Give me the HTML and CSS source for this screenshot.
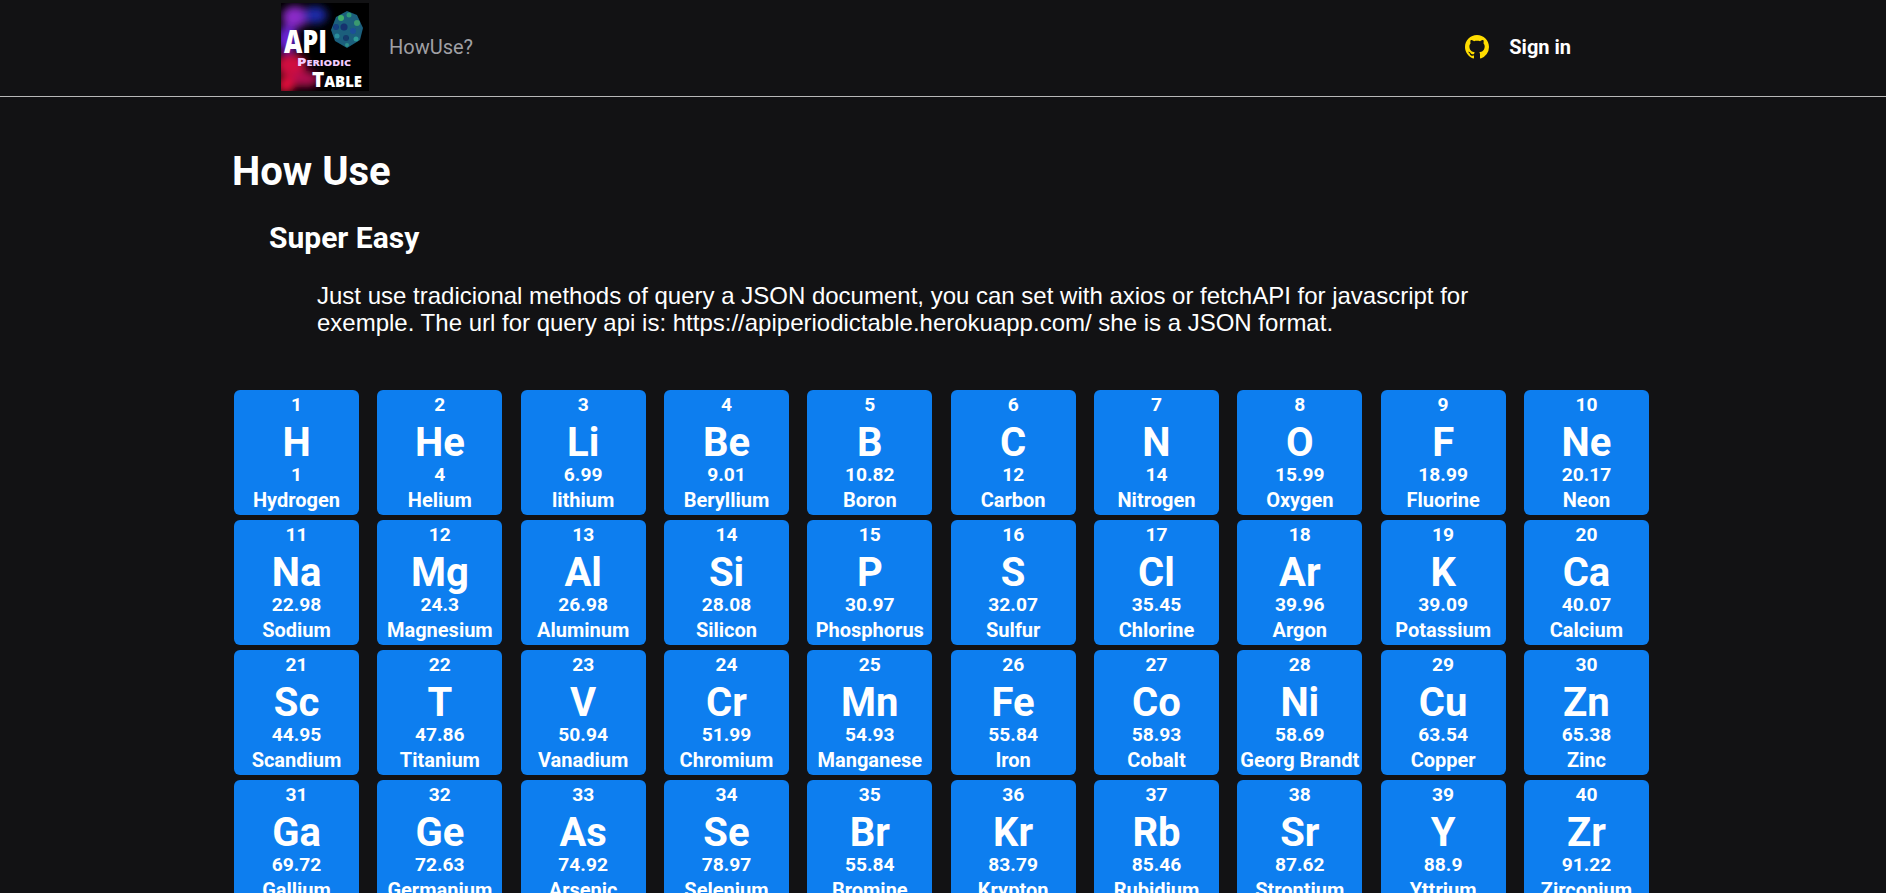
FILE: index.html
```html
<!DOCTYPE html>
<html lang="en">
<head>
<meta charset="utf-8">
<title>API Periodic Table</title>
<link rel="stylesheet" href="styles.css">
</head>
<body>
<header class="topbar">
  <div class="brand">
    <svg class="logo" viewBox="0 0 88 88" width="88" height="88" role="img" aria-label="API Periodic Table logo">
      <defs>
        <filter id="blur" x="-50%" y="-50%" width="200%" height="200%"><feGaussianBlur stdDeviation="4"/></filter>
        <filter id="blur2" x="-20%" y="-20%" width="140%" height="140%"><feGaussianBlur stdDeviation="0.5"/></filter>
        <clipPath id="square"><rect width="88" height="88"/></clipPath>
      </defs>
      <rect width="88" height="88" fill="#000"/>
      <g clip-path="url(#square)">
        <g filter="url(#blur)">
          <ellipse cx="14" cy="14" rx="13" ry="11" fill="#8a2bc8"/>
          <ellipse cx="34" cy="12" rx="12" ry="9" fill="#1b2aa8"/>
          <ellipse cx="6" cy="36" rx="10" ry="13" fill="#6a20d8"/>
          <ellipse cx="10" cy="62" rx="15" ry="12" fill="#d01040"/>
          <ellipse cx="24" cy="76" rx="14" ry="8" fill="#b00c50"/>
          <ellipse cx="5" cy="82" rx="9" ry="8" fill="#e8103c"/>
        </g>
        <g filter="url(#blur2)">
          <path d="M66 45 L54 38 L50 27 L55 14 L66 8 L76 12 L82 25 L79 37 Z" fill="#1a5f7c"/>
          <circle cx="60" cy="15" r="3" fill="#3fae6a"/>
          <circle cx="68" cy="12" r="2.5" fill="#2f9a78"/>
          <circle cx="76" cy="20" r="3" fill="#3a9a70"/>
          <circle cx="55" cy="24" r="3" fill="#123f80"/>
          <circle cx="63" cy="24" r="3.5" fill="#16306e"/>
          <circle cx="72" cy="28" r="3" fill="#1d4f98"/>
          <circle cx="56" cy="33" r="2.5" fill="#2a8d9a"/>
          <circle cx="65" cy="35" r="3" fill="#123a6a"/>
          <circle cx="75" cy="36" r="2.5" fill="#2d9a96"/>
          <circle cx="66" cy="42" r="2" fill="#2f8f8a"/>
        </g>
      </g>
      <text class="logo-api" x="3" y="50" textLength="43" lengthAdjust="spacingAndGlyphs">API</text>
      <text class="logo-periodic" x="16" y="63" textLength="54" lengthAdjust="spacingAndGlyphs"><tspan class="logo-cap">P</tspan>ERIODIC</text>
      <text class="logo-table" x="31" y="84" textLength="50" lengthAdjust="spacingAndGlyphs"><tspan class="logo-t">T</tspan>ABLE</text>
    </svg>
    <a class="howuse" href="#">HowUse?</a>
  </div>
  <div class="account">
    <svg class="github" viewBox="0 0 16 16" width="24" height="24" aria-hidden="true"><path fill="#ffdd00" d="M8 0C3.58 0 0 3.58 0 8c0 3.54 2.29 6.53 5.47 7.59.4.07.55-.17.55-.38 0-.19-.01-.82-.01-1.49-2.01.37-2.53-.49-2.69-.94-.09-.23-.48-.94-.82-1.13-.28-.15-.68-.52-.01-.53.63-.01 1.08.58 1.23.82.72 1.21 1.87.87 2.33.66.07-.52.28-.87.51-1.07-1.78-.2-3.64-.89-3.64-3.95 0-.87.31-1.59.82-2.15-.08-.2-.36-1.02.08-2.12 0 0 .67-.21 2.2.82.64-.18 1.32-.27 2-.27.68 0 1.36.09 2 .27 1.53-1.04 2.2-.82 2.2-.82.44 1.1.16 1.92.08 2.12.51.56.82 1.27.82 2.15 0 3.07-1.87 3.75-3.65 3.95.29.25.54.73.54 1.48 0 1.07-.01 1.93-.01 2.2 0 .21.15.46.55.38A8.013 8.013 0 0016 8c0-4.42-3.58-8-8-8z"/></svg>
    <a class="signin" href="#">Sign in</a>
  </div>
</header>
<main class="content">
  <h1 class="title">How Use</h1>
  <h2 class="subtitle">Super Easy</h2>
  <p class="intro">Just use tradicional methods of query a JSON document, you can set with axios or fetchAPI for javascript for exemple. The url for query api is: https://apiperiodictable.herokuapp.com/ she is a JSON format.</p>
  <section class="table">
    <div class="card"><span class="num">1</span><span class="sym">H</span><span class="num">1</span><span class="name">Hydrogen</span></div>
    <div class="card"><span class="num">2</span><span class="sym">He</span><span class="num">4</span><span class="name">Helium</span></div>
    <div class="card"><span class="num">3</span><span class="sym">Li</span><span class="num">6.99</span><span class="name">lithium</span></div>
    <div class="card"><span class="num">4</span><span class="sym">Be</span><span class="num">9.01</span><span class="name">Beryllium</span></div>
    <div class="card"><span class="num">5</span><span class="sym">B</span><span class="num">10.82</span><span class="name">Boron</span></div>
    <div class="card"><span class="num">6</span><span class="sym">C</span><span class="num">12</span><span class="name">Carbon</span></div>
    <div class="card"><span class="num">7</span><span class="sym">N</span><span class="num">14</span><span class="name">Nitrogen</span></div>
    <div class="card"><span class="num">8</span><span class="sym">O</span><span class="num">15.99</span><span class="name">Oxygen</span></div>
    <div class="card"><span class="num">9</span><span class="sym">F</span><span class="num">18.99</span><span class="name">Fluorine</span></div>
    <div class="card"><span class="num">10</span><span class="sym">Ne</span><span class="num">20.17</span><span class="name">Neon</span></div>
    <div class="card"><span class="num">11</span><span class="sym">Na</span><span class="num">22.98</span><span class="name">Sodium</span></div>
    <div class="card"><span class="num">12</span><span class="sym">Mg</span><span class="num">24.3</span><span class="name">Magnesium</span></div>
    <div class="card"><span class="num">13</span><span class="sym">Al</span><span class="num">26.98</span><span class="name">Aluminum</span></div>
    <div class="card"><span class="num">14</span><span class="sym">Si</span><span class="num">28.08</span><span class="name">Silicon</span></div>
    <div class="card"><span class="num">15</span><span class="sym">P</span><span class="num">30.97</span><span class="name">Phosphorus</span></div>
    <div class="card"><span class="num">16</span><span class="sym">S</span><span class="num">32.07</span><span class="name">Sulfur</span></div>
    <div class="card"><span class="num">17</span><span class="sym">Cl</span><span class="num">35.45</span><span class="name">Chlorine</span></div>
    <div class="card"><span class="num">18</span><span class="sym">Ar</span><span class="num">39.96</span><span class="name">Argon</span></div>
    <div class="card"><span class="num">19</span><span class="sym">K</span><span class="num">39.09</span><span class="name">Potassium</span></div>
    <div class="card"><span class="num">20</span><span class="sym">Ca</span><span class="num">40.07</span><span class="name">Calcium</span></div>
    <div class="card"><span class="num">21</span><span class="sym">Sc</span><span class="num">44.95</span><span class="name">Scandium</span></div>
    <div class="card"><span class="num">22</span><span class="sym">T</span><span class="num">47.86</span><span class="name">Titanium</span></div>
    <div class="card"><span class="num">23</span><span class="sym">V</span><span class="num">50.94</span><span class="name">Vanadium</span></div>
    <div class="card"><span class="num">24</span><span class="sym">Cr</span><span class="num">51.99</span><span class="name">Chromium</span></div>
    <div class="card"><span class="num">25</span><span class="sym">Mn</span><span class="num">54.93</span><span class="name">Manganese</span></div>
    <div class="card"><span class="num">26</span><span class="sym">Fe</span><span class="num">55.84</span><span class="name">Iron</span></div>
    <div class="card"><span class="num">27</span><span class="sym">Co</span><span class="num">58.93</span><span class="name">Cobalt</span></div>
    <div class="card"><span class="num">28</span><span class="sym">Ni</span><span class="num">58.69</span><span class="name">Georg Brandt</span></div>
    <div class="card"><span class="num">29</span><span class="sym">Cu</span><span class="num">63.54</span><span class="name">Copper</span></div>
    <div class="card"><span class="num">30</span><span class="sym">Zn</span><span class="num">65.38</span><span class="name">Zinc</span></div>
    <div class="card"><span class="num">31</span><span class="sym">Ga</span><span class="num">69.72</span><span class="name">Gallium</span></div>
    <div class="card"><span class="num">32</span><span class="sym">Ge</span><span class="num">72.63</span><span class="name">Germanium</span></div>
    <div class="card"><span class="num">33</span><span class="sym">As</span><span class="num">74.92</span><span class="name">Arsenic</span></div>
    <div class="card"><span class="num">34</span><span class="sym">Se</span><span class="num">78.97</span><span class="name">Selenium</span></div>
    <div class="card"><span class="num">35</span><span class="sym">Br</span><span class="num">55.84</span><span class="name">Bromine</span></div>
    <div class="card"><span class="num">36</span><span class="sym">Kr</span><span class="num">83.79</span><span class="name">Krypton</span></div>
    <div class="card"><span class="num">37</span><span class="sym">Rb</span><span class="num">85.46</span><span class="name">Rubidium</span></div>
    <div class="card"><span class="num">38</span><span class="sym">Sr</span><span class="num">87.62</span><span class="name">Strontium</span></div>
    <div class="card"><span class="num">39</span><span class="sym">Y</span><span class="num">88.9</span><span class="name">Yttrium</span></div>
    <div class="card"><span class="num">40</span><span class="sym">Zr</span><span class="num">91.22</span><span class="name">Zirconium</span></div>
  </section>
</main>
</body>
</html>
```

FILE: styles.css
```css
* { box-sizing: border-box; }
html, body { height: 893px; overflow: hidden; }
body {
  margin: 0;
  background: #121214;
  color: #fff;
  font-family: Roboto, "Liberation Sans", sans-serif;
}
a { text-decoration: none; }

.topbar {
  height: 97px;
  border-bottom: 1px solid #b8b8b8;
  padding: 3px 315px 0 281px;
  display: flex;
  justify-content: space-between;
}
.brand { display: flex; align-items: flex-start; gap: 20px; }
.logo { display: block; overflow: visible; }
.logo-api { font: 800 32px "Open Sans", sans-serif; fill: #fff; }
.logo-periodic { font: 800 8px "Open Sans", sans-serif; fill: #f3ccff; }
.logo-cap { font-size: 11px; }
.logo-table { font: 800 15px "Open Sans", sans-serif; fill: #fff; }
.logo-t { font-size: 21px; }
.howuse { font-size: 20px; line-height: 24px; margin-top: 32px; color: #a0a0a5; }
.account { display: flex; align-items: center; gap: 20px; height: 88px; padding-bottom: 1px; }
.github { display: block; }
.signin { font-size: 20px; font-weight: 700; color: #fff; }

.content { padding: 0 237px 0 232px; }
.title { margin: 0; padding-top: 52px; font-size: 40px; line-height: 46px; font-weight: 700; }
.subtitle { margin: 0; padding: 26px 0 0 37px; font-size: 30px; line-height: 34px; font-weight: 700; }
.intro {
  margin: 0;
  padding: 27px 0 0 85px;
  width: 1270px;
  font: 400 24px/27px "Liberation Sans", Arial, sans-serif;
}
.table {
  margin-top: 54px;
  display: grid;
  grid-template-columns: repeat(10, 125px);
  justify-content: space-between;
  row-gap: 5px;
  padding-left: 2px;
}
.card {
  height: 125px;
  background: #0d7eef;
  border-radius: 6px;
  padding-top: 3px;
  display: flex;
  flex-direction: column;
  align-items: center;
  text-align: center;
  white-space: nowrap;
}
.num { font-size: 19.2px; line-height: 24px; font-weight: 700; }
.sym { font-size: 40px; line-height: 44px; font-weight: 700; padding-top: 4px; height: 46px; }
.name { font-size: 20px; line-height: 26px; font-weight: 700; }
```
